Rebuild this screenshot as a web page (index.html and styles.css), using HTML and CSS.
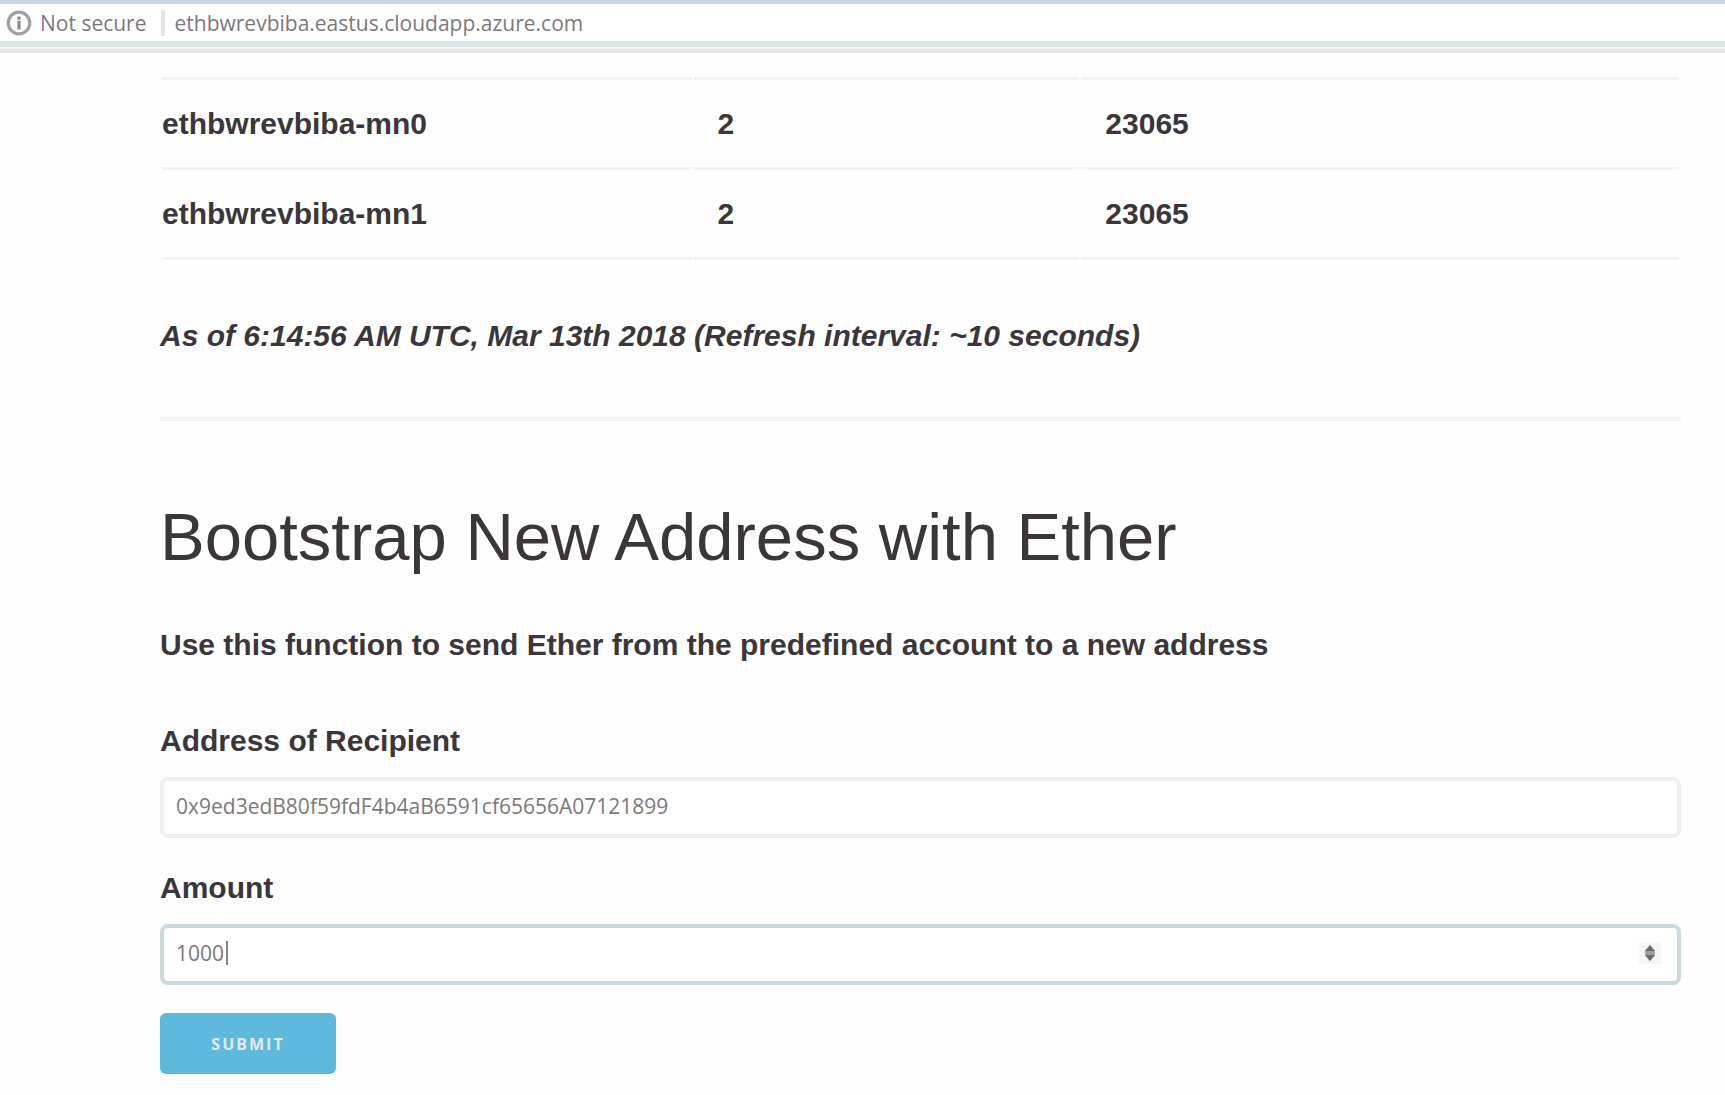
FILE: index.html
```html
<!DOCTYPE html>
<html lang="en">
<head>
<meta charset="utf-8">
<title>Bootstrap New Address with Ether</title>
<link rel="stylesheet" href="styles.css">
</head>
<body>
<header class="address-bar">
  <svg class="info-icon" viewBox="0 0 24 26" aria-hidden="true">
    <ellipse cx="12" cy="13" rx="10" ry="10" fill="none" stroke="#a3a0a3" stroke-width="3"/>
    <path d="M12 7v3M12 11v8" stroke="#8c898c" stroke-width="3"/>
  </svg>
  <span class="security">Not secure</span>
  <span class="divider"></span>
  <span class="url">ethbwrevbiba.eastus.cloudapp.azure.com</span>
</header>
<main class="container">
  <table class="nodes">
    <colgroup><col class="col-name"><col class="col-peers"><col></colgroup>
    <tbody>
      <tr><td>ethbwrevbiba-mn0</td><td>2</td><td>23065</td></tr>
      <tr><td>ethbwrevbiba-mn1</td><td>2</td><td>23065</td></tr>
    </tbody>
  </table>
  <p class="as-of">As of 6:14:56 AM UTC, Mar 13th 2018 (Refresh interval: ~10 seconds)</p>
  <hr class="rule">
  <h1 class="title">Bootstrap New Address with Ether</h1>
  <p class="intro">Use this function to send Ether from the predefined account to a new address</p>
  <form class="form">
    <label class="label" for="recipient">Address of Recipient</label>
    <input class="field" id="recipient" type="text" value="0x9ed3edB80f59fdF4b4aB6591cf65656A07121899">
    <label class="label" for="amount">Amount</label>
    <div class="amount">
      <input class="field field-active" id="amount" type="number" value="1000">
      <span class="caret"></span>
      <svg class="spinner" viewBox="0 0 22 22" aria-hidden="true">
        <rect width="22" height="22" fill="#f4f6f6"/>
        <path d="M11 3l5 6v4l-5 6-5-6V9z" fill="#a3a0a3"/>
        <path d="M11 3l5 6H6zM11 19l5-6H6z" fill="#6f6c6f"/>
      </svg>
    </div>
    <button class="submit" type="button">SUBMIT</button>
  </form>
</main>
</body>
</html>
```
FILE: styles.css
```css
* {
  box-sizing: border-box;
}

body {
  margin: 0;
  background: #fefefe;
  color: #3a363a;
  font-family: "Liberation Sans", Arial, sans-serif;
  font-size: 30px;
  font-weight: bold;
  line-height: 40px;
}

.address-bar {
  display: flex;
  align-items: center;
  height: 47px;
  padding: 0 6px;
  border-top: 4px solid #c9d8df;
  border-bottom: 6px solid #dde5e6;
  box-shadow: 0 2px 0 #f4f6f6, 0 6px 0 #e1e6e7;
  background: #fff;
  color: #7c797c;
  font-family: "Open Sans", "Noto Sans", sans-serif;
  font-size: 21px;
  font-weight: normal;
}

.info-icon {
  width: 26px;
  height: 28px;
  margin-right: 8px;
}

.divider {
  width: 4px;
  height: 26px;
  margin: 0 10px 0 14px;
  background: #e1e6e7;
}

.container {
  margin: 0 44px 0 160px;
  padding-top: 30px;
}

.nodes {
  width: 100%;
  table-layout: fixed;
  border-spacing: 2px 0;
  border-collapse: separate;
}

.col-name {
  width: 35%;
}

.col-peers {
  width: 25.5%;
}

.nodes td {
  height: 90px;
  padding: 0 24px;
  border-bottom: 3px solid #f1f4f4;
}

.nodes tr:first-child td {
  height: 93px;
  border-top: 3px solid #f1f4f4;
}

.nodes td:first-child {
  padding-left: 0;
}

.as-of {
  margin: 56px 0 61px;
  font-style: italic;
}

.rule {
  height: 4px;
  margin: 0;
  border: 0;
  background: #f1f4f4;
}

.title {
  margin: 76px 0 48px;
  font-size: 67px;
  font-weight: normal;
  line-height: 80px;
}

.intro {
  margin: 0 0 56px;
}

.form {
  display: flex;
  flex-direction: column;
  align-items: flex-start;
}

.label {
  margin-bottom: 16px;
}

.field {
  display: block;
  width: 100%;
  height: 61px;
  margin: 0 0 30px;
  padding: 0 12px 4px;
  border: 4px solid #eef1f1;
  border-radius: 8px;
  outline: 0;
  background: #fff;
  color: #7c797c;
  font-family: "Open Sans", "Noto Sans", sans-serif;
  font-size: 21px;
  appearance: textfield;
}

.field-active {
  margin-bottom: 28px;
  border-color: #cbd9df;
}

.field::-webkit-inner-spin-button {
  appearance: none;
  margin: 0;
}

.amount {
  position: relative;
  width: 100%;
}

.caret {
  position: absolute;
  top: 17px;
  left: 66px;
  width: 2px;
  height: 24px;
  background: #858285;
}

.spinner {
  position: absolute;
  top: 18px;
  right: 20px;
  width: 22px;
  height: 22px;
}

.submit {
  width: 176px;
  height: 61px;
  padding: 0;
  border: 0;
  border-radius: 6px;
  background: #5dbadd;
  color: #e1eaee;
  font-family: "Open Sans", "Noto Sans", sans-serif;
  font-size: 16px;
  font-weight: bold;
  letter-spacing: 2px;
}
```
